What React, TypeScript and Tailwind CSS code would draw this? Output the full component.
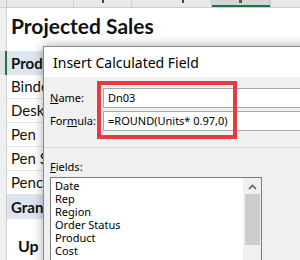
import React from "react";

type Row = { label: string; bold?: boolean; shaded?: boolean; selected?: boolean };

const rows: Row[] = [
  { label: "Product", bold: true, shaded: true, selected: true },
  { label: "Binder" },
  { label: "Desk" },
  { label: "Pen" },
  { label: "Pen Set" },
  { label: "Pencil" },
  { label: "Grand Total", bold: true, shaded: true },
];

const fields = ["Date", "Rep", "Region", "Order Status", "Product", "Cost"];

export default function App() {
  return (
    <div className="relative w-[300px] h-[260px] overflow-hidden bg-white [font-family:Lato,'Liberation_Sans',sans-serif] text-[#111]">
      {/* column header strip */}
      <div className="flex h-[8px] bg-[#e8e8e8] border-b border-[#cdcdcd]">
        <div className="w-[7px] border-r border-[#c8c8c8]" />
        <div className="w-[67px] border-r border-[#d0d0d0]" />
        <div className="w-[58px] border-r border-[#d0d0d0] relative">
          <div className="absolute left-[28px] top-0 w-[2px] h-[3px] bg-[#444]" />
        </div>
        <div className="w-[80px] border-r border-[#d0d0d0] relative">
          <div className="absolute left-[50px] top-0 w-[2px] h-[3px] bg-[#444]" />
        </div>
        <div className="w-[58px] bg-[#d6d6d6] border-b-2 border-[#217346] relative">
          <div className="absolute left-[27px] top-0 w-[3px] h-[3px] bg-[#217346]" />
        </div>
        <div className="flex-1 border-l border-[#c8c8c8]" />
      </div>

      {/* title row */}
      <div className="flex h-[43px]">
        <div className="w-[7px] bg-[#efefef] border-r border-[#cfcfcf]" />
        <div className="flex-1 pl-[4px] pt-[5px] text-[21px] font-bold leading-[25px] whitespace-nowrap">
          Projected Sales
        </div>
      </div>

      {/* pivot rows */}
      {rows.map((r) => (
        <div key={r.label} className="flex h-[24px]">
          <div
            className={
              r.selected
                ? "w-[7px] bg-[#e2e2e2] border-r-2 border-[#217346]"
                : "w-[7px] bg-[#efefef] border-r border-[#cfcfcf]"
            }
          />
          <div
            className={
              (r.shaded ? "bg-[#dde5ef] " : "border-b border-[#e4e4e4] ") +
              (r.bold ? "font-bold " : "") +
              "flex-1 pl-[4px] flex items-center text-[15px] whitespace-nowrap"
            }
          >
            {r.label}
          </div>
        </div>
      ))}

      {/* Up row */}
      <div className="flex h-[41px]">
        <div className="w-[7px] bg-[#efefef] border-r border-[#cfcfcf]" />
        <div className="flex-1 pl-[11px] pt-[17px] text-[16px] font-bold leading-[20px] whitespace-nowrap">
          Up Sales
        </div>
      </div>

      {/* dialog */}
      <div className="absolute left-[43px] top-[46px] w-[280px] h-[240px] border border-[#8a8a8a] bg-[#f0f0f0] shadow-[0_0_10px_rgba(0,0,0,0.35)] [font-family:'Noto_Sans',sans-serif] text-[#000]">
        <div className="h-[30px] bg-white flex items-center pl-[9px] text-[14px]">
          Insert Calculated Field
        </div>
        <div className="flex flex-col pt-[11px]">
          <div className="flex items-center h-[20px]">
            <div className="w-[59px] pl-[6px] text-[11px]">
              <span className="underline">N</span>ame:
            </div>
            <div className="flex-1 h-[20px] bg-white border border-[#a9a9a9] pl-[4px] flex items-center text-[11px]">
              Dn03
            </div>
          </div>
          <div className="flex items-center h-[20px] mt-[3px]">
            <div className="w-[59px] pl-[6px] text-[11px]">
              For<span className="underline">m</span>ula:
            </div>
            <div className="flex-1 h-[20px] bg-white border border-[#a9a9a9] pl-[4px] flex items-center text-[11px] whitespace-nowrap">
              =ROUND(Units* 0.97,0)
            </div>
          </div>
          <div className="h-px bg-[#dadada] mt-[16px]" />
          <div className="pl-[6px] mt-[12px] text-[11px] leading-[14px]">
            <span className="underline">F</span>ields:
          </div>
          <div className="ml-[6px] mt-[3px] w-[212px] h-[100px] bg-white border border-[#7a7a7a] flex">
            <div className="flex-1 pl-[4px] pt-[1px] text-[11px] leading-[13px]">
              {fields.map((f) => (
                <div key={f}>{f}</div>
              ))}
            </div>
            <div className="w-[18px] bg-[#f0f0f0] flex flex-col items-center">
              <svg width="9" height="6" viewBox="0 0 9 6" className="mt-[6px]">
                <path d="M1 5 L4.5 1.5 L8 5" fill="none" stroke="#606060" strokeWidth="1.6" />
              </svg>
              <div className="mt-[4px] w-[15px] h-[51px] bg-[#cdcdcd]" />
            </div>
          </div>
        </div>
        {/* red highlight */}
        <div className="absolute left-[53px] top-[34px] w-[140px] h-[58px] border-[4px] border-[#e9393e]" />
      </div>
    </div>
  );
}
